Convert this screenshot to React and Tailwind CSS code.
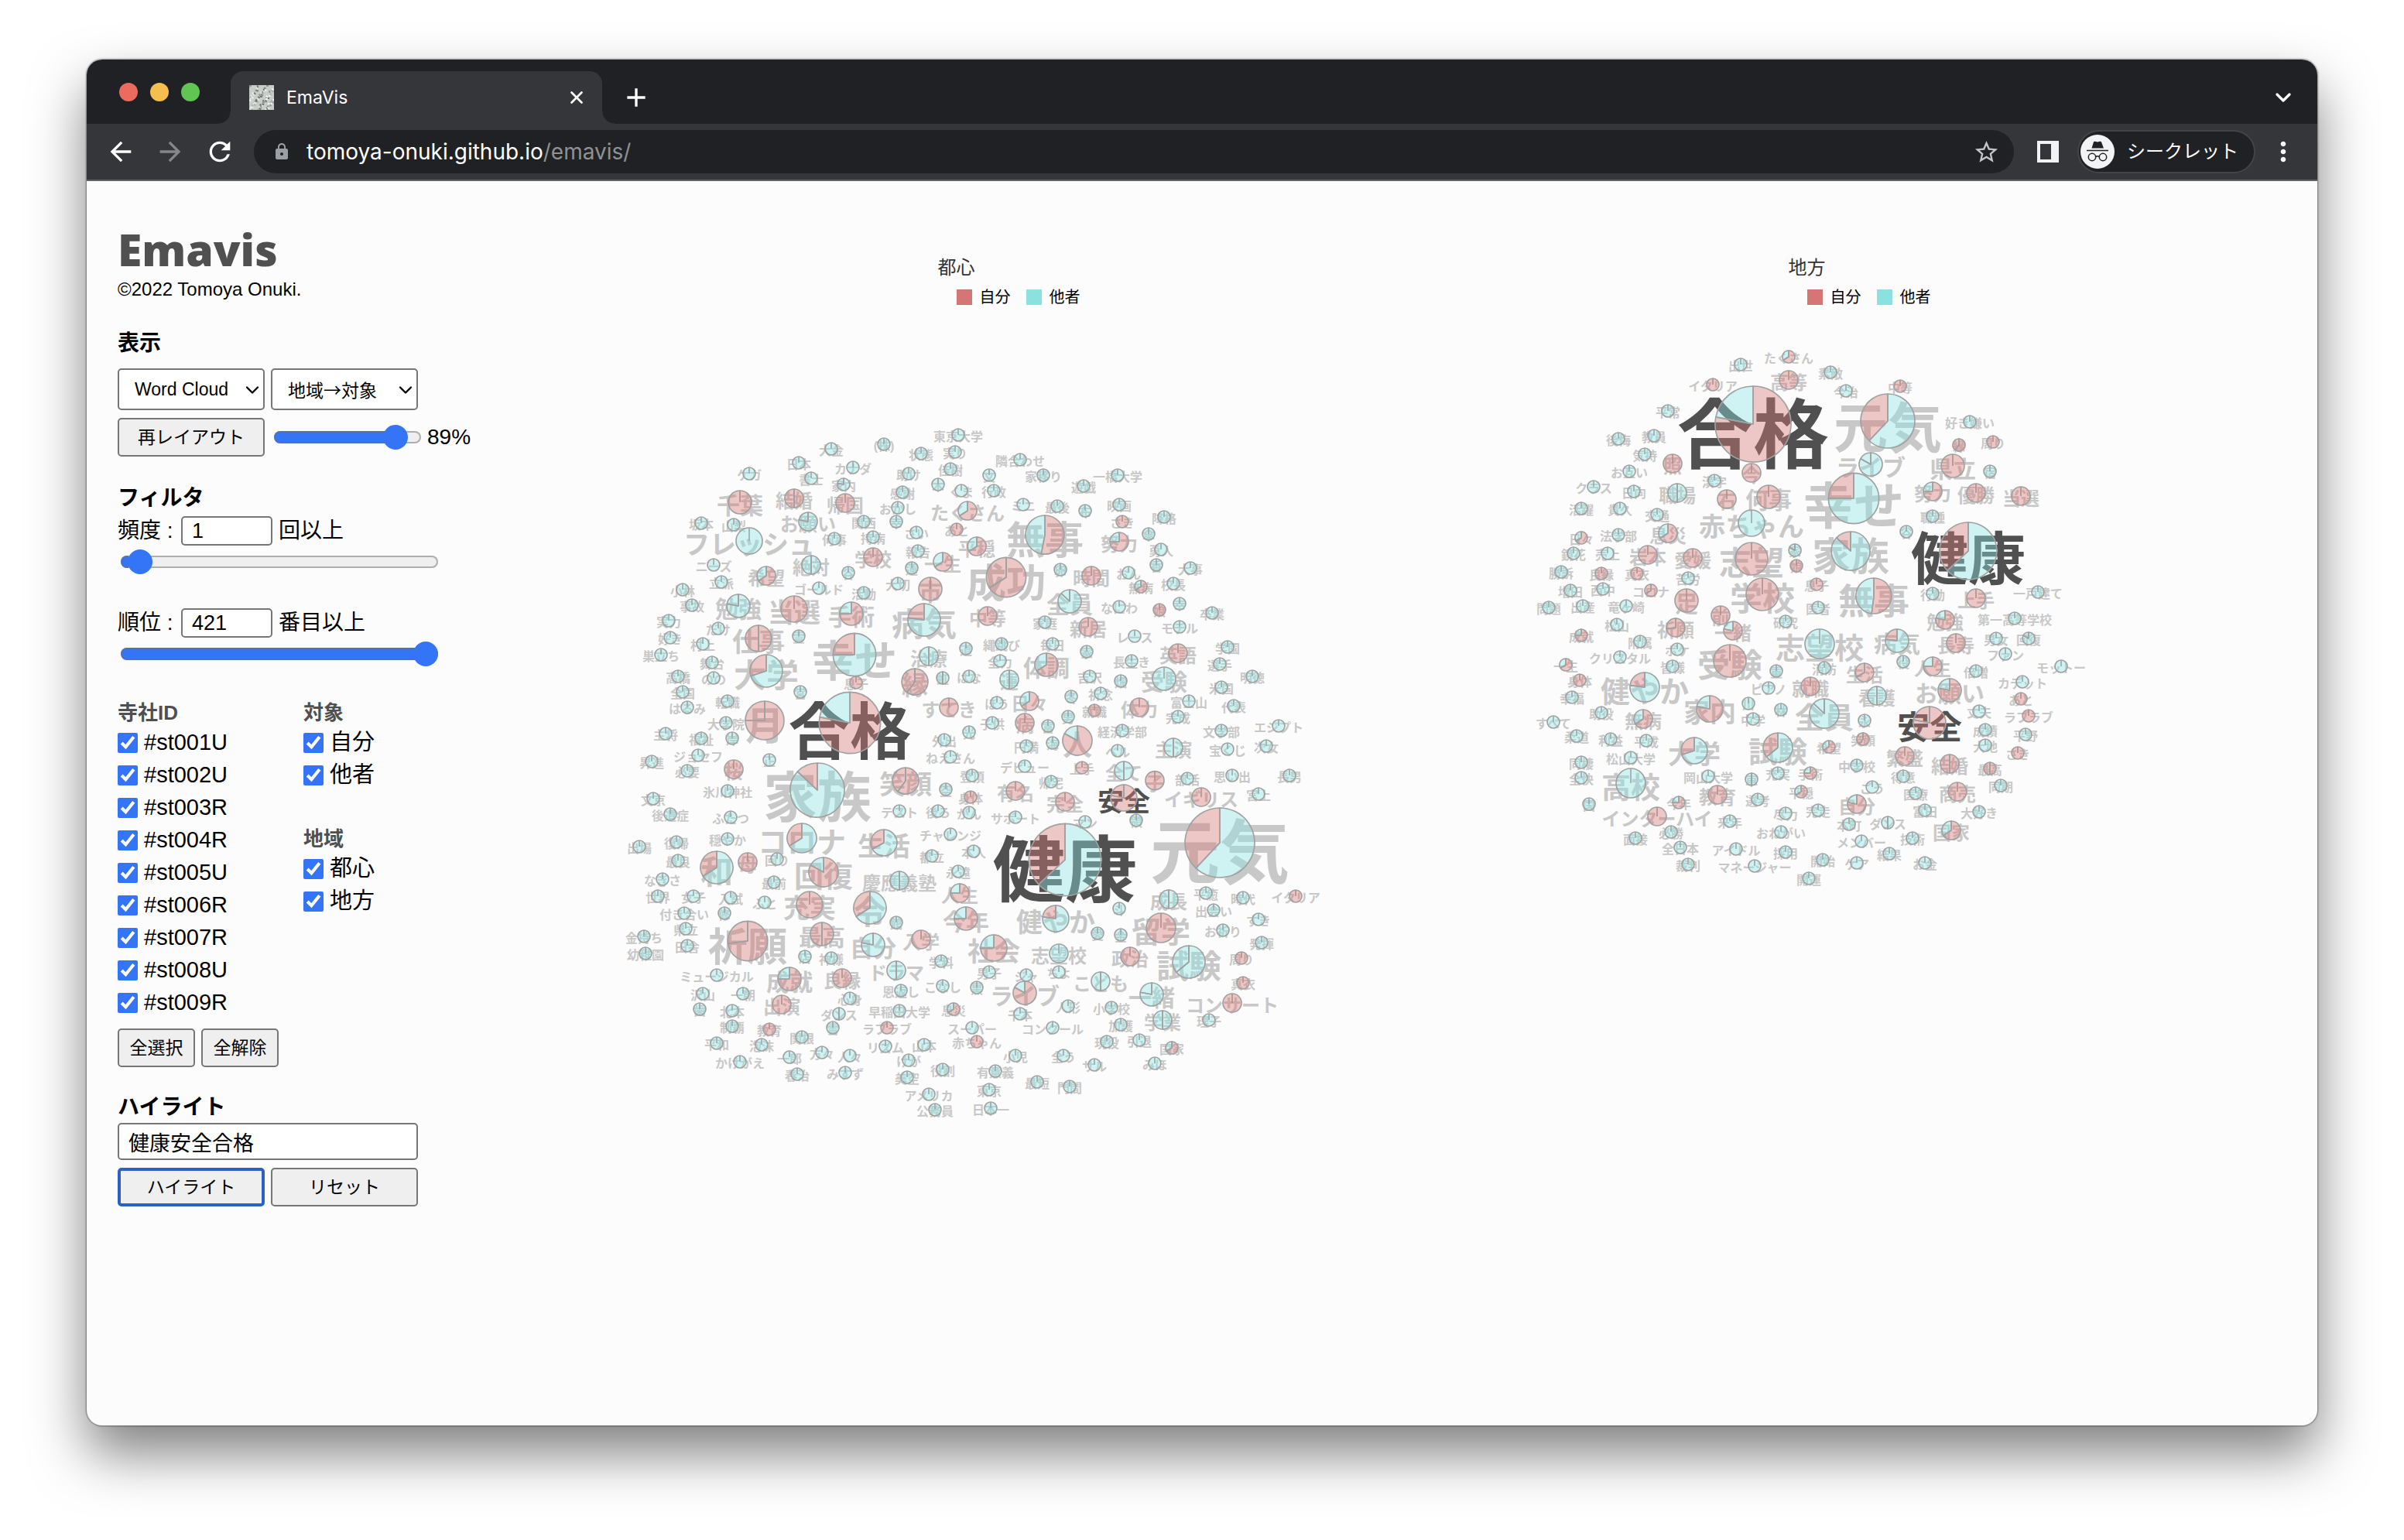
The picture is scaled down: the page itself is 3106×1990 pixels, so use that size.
import React, { useState } from "react";
import { MdArrowBack, MdArrowForward, MdRefresh, MdLock, MdStarBorder, MdAdd, MdMoreVert } from "react-icons/md";
import { ChevronDown, X } from "lucide-react";

/*
 * Word lists. Each line: word, x, y, radius (default 24), slices (default "c").
 * Slices: "r" / "c" is a whole red or cyan pie; "rc75" is 75% red then cyan.
 */
const CITY = [
  { dx: 0, dy: 0, rows: `
東京大学 1344 66
(株) 1056 102
大金 852 120
状態 1200 138
実り 1332 132
日本 726 174
カナダ 936 192
佳樹 1314 198
ケガ 534 216
助け 1152 216
書士 774 234
家内 900 258 24 cc78
木 1266 258
感謝 1128 288
くま 1356 282
千葉 498 327 45 r
結婚 708 312 36 rr50
帰国 906 330 36 r
おかし 1110 348
たくさん 1380 360 36 rc66
お願い 762 402 36 cc78
坂本 348 408
山梨 474 414
関西 978 402
幸 1104 402
あと 1338 432 24 r
さい 1182 444
フレッシュ 534 477 51
何事 864 468
持病 1014 462
報告 1188 516
学校 1014 540 36 r
平穏 1416 498 36 rc66
ニーズ 396 570
絶対 774 570 36 cc50
一生 1284 558 36 rc66
蓮 1164 582
希望 600 612 36 rc66
谷 918 600
立派 426 636
小林 276 666
ゴールド 804 660
活動 978 678
大切 1110 642
市 1236 663 45 r
事故 312 726
勉強 492 729 45 cc78
当選 708 741 51 r
手術 930 759 45 rc75
病気 1212 783 63 cr77
実力 222 786
だけ 414 816
仕事 570 855 51 rr50
霊 726 846
幸せ 942 918 83 cr75
好き 228 852
村上 354 876
巣立ち 192 918
舞台 390 948
治療 1230 924 36 cc50
道 1374 894
大学 600 981 63 cr70
高橋 258 1002
のの 396 1008
縁 1176 1023 51 rr60
虹 1284 1008 24 cc50
はな 1386 1002
息子 948 1026 24 r
全国 276 1062
営 732 1062
はるみ 294 1122
転職 450 1098
すてき 1308 1122 36 r
合格 924 1182 119 rc78
月 594 1173 75 rr75
大学院 444 1182
主将 210 1224
福祉 348 1242
岸 468 1242
光 1386 1218
外出 1290 1248
ねえさん 1314 1314
ジョセフ 336 1308
昇進 156 1332
桜 474 1362 36 r
正 612 1326
必要 294 1368
登頂 1398 1386` },
  { dx: 1350, dy: 0, rows: `
隣合わせ 234 162
文 114 222
家移り 324 222
一橋大学 612 222
遊戯 480 264
行政 132 282
ミニ 246 336
最後 378 342
布 486 360
映画 618 336
降格 792 384
さき 630 402 24 r
無事 330 453 75 rc53
努力 618 480 36 rc75
傘 732 450
勇人 780 510
香 762 570
成功 180 618 77 rr66
卵 390 588
時間 510 612 36 r
おん 654 600
大事 894 582
無病 702 654 24 rc66
校長 828 642
全員 426 711 45 cc87
なにわ 618 732
娘 774 744 24 r
幸 852 720
卒業 978 756
中等 108 768 36 r
家庭 330 792
新居 498 810 36 r
モデル 852 810
レース 678 846
縄跳び 162 876
毎日 360 876
家 492 906
英語 846 912 36 r
学園 1038 888
全力 156 942
体調 336 957 45 rc66
長生き 666 942
選手 1008 954
運 192 1014 36 cc50
吉沢 504 1002
畑 624 1020
受験 792 1011 45
明徳 1134 1002
米国 1014 1044
冬 432 1080
祈念 546 1068
ほう 144 1104
日々 270 1098 36 rc66
就職 522 1134 24 r
体力 696 1122 36 r
富士山 888 1098
代表 1062 1116
男 420 1158
完成 846 1158
子供 126 1182
病 252 1182 36 r
富 342 1194
人 456 1251 57 rc83
経済学部 630 1212
文学部 1014 1212
エジプト 1236 1194
円満 258 1272
海 360 1260
ベル 612 1290
主演 828 1278 36 cc50
宝くじ 1038 1284
次女 1188 1272
デビュー 252 1350
上手 474 1356 24 r
全て 636 1368 36 cc50
思い出 1056 1386
長男 1278 1386` },
  { dx: 0, dy: 1380, rows: `
家族 798 63 105 cr87
笑顔 1140 27 51 rr60
空 1296 60
身体 1392 90 24 r
氷川神社 450 66
文京 162 96
テスト 1116 144
後ろ 1266 144
がん 1386 150
後遺症 228 156
ふたつ 462 168
コロナ 738 249 57 cr66
生活 1056 267 51 cr67
チャレンジ 1314 234
穏やか 450 252
復帰 252 264
出場 108 282
本人 1404 300
都立 1242 318
最良 258 336
和 408 363 63 cr66
母 528 342 36 r
回り 642 330
回復 822 381 57 rc83
永遠 1344 378
なぎさ 198 408
慶應義塾 1116 414 36 cc50
最前 630 420
人生 1350 462 36 rc75
世界 180 474
女子 318 474
入試 462 480
充実 768 507 51 r
ふと 594 498
令 1002 519 63 cr66
今年 1374 561 45 rc75
付き合い 282 540
修 438 540
館 1104 576
県立 288 600
金持ち 126 630
祈願 528 648 77 rr73
最高 816 621 45 rr50
自分 1014 663 45 cc78
入学 1200 642 36 r
田舎 294 666
幼稚園 132 696
店 750 708
神様 852 714
学科 1278 726
ドラマ 1104 762 36 cc50
ミュージカル 408 780
成就 690 795 45 rc75
良縁 894 792 36 r
こなし 1284 822
黒 1416 828
恩返し 1122 840
沢山 354 852
一朝 510 852
心身 924 870
出演 660 894 36 r
歯 342 912
北本 468 918
息災 1326 912 24 rc66
早稲田大学 1116 918
ダンス 882 930 24 cc50
制覇 468 978
教育 612 990 24 r
雪 858 984
ラブラブ 1068 984 24 r
スーパー 1398 984
関根 738 1020
赤ちゃん 1416 1038 24 r
平和 408 1044
泡沫 582 1050
リズム 1062 1056
山本 1212 1050
方々 816 1080
人々 924 1092
一郎 690 1098
かけがえ 498 1116
けが 1152 1110
役割 1284 1146
みすず 906 1158
春治 720 1164
美空 1146 1176
アメリカ 1230 1242
公務員 1254 1302` },
  { dx: 1350, dy: 1380, rows: `
帰宅 354 30
子 756 26 36 r
部活 882 18
有名 216 66 36 r
完全 408 108 36 r
安全 636 93 51 rr78
イギリス 936 90 36 r
宮上 1158 78
サポート 216 168
マン 486 186
領 684 180
元気 1008 267 135 cr62
健康 408 333 140 cr63
平癒 954 462
時代 1098 480
イタリア 1302 474 24 r
成長 810 486 36 cc50
出会い 984 528
斗 618 522
健やか 372 561 51 cr77
すき 1158 564
留学 780 597 57 r
お祈り 1020 606
愛 534 618
金 624 624
発揮 1170 654
社会 132 675 51 rc75
志望校 384 696 36
政治 660 708 36 r
試験 888 729 63 cc64
周り 1092 714 24 r
男子 114 768
ちよ 384 768
ジャ 258 780
こども 546 804 36 cc50
真衣 1098 810 24 r
ライブ 252 849 45 rc83
一緒 744 855 45 cc78
コンサート 1056 888 36 r
人形 420 900
小学校 588 906
千本 234 930
学業 786 954 36 cc50
理子 966 954
加護 624 972
コンクール 360 984
現役 570 1038
引退 696 1032
国家 822 1062 24 rc66
小児 216 1092
全う 402 1092
サル 522 1128
みほ 756 1122
有意義 138 1152
最短 300 1194
門間 426 1212
東京 114 1224
日本一 120 1296` },
];

const REGION = [
  { dx: 0, dy: 0, rows: `
たくさん 1023 93 24 rc66
出世 837 123
高等 1023 183 36 r
イタリア 729 201 24 r
合格 885 354 147 rc78
平常 555 303
後悔 363 411
教員 501 399
気持 465 471
照 573 507 36 r
お互い 405 537
今 879 543 36 r
漢字 735 573
クラス 267 597
日向 423 615
職場 591 621 36 cc50
石 783 645 36 r
何事 945 636 45 r
活躍 219 681
貴久 369 681
交通 513 705
赤ちゃん 879 738 51
息災 555 777 36 rc66
日々 219 795 24 rc66
法学部 363 783
鏡花 189 855
売上 321 855
岩本 477 861 36 r
愛媛 651 873 36 r
志望 879 876 63 r
家 1047 843 24 cc83
娘 1053 903 24 r
勝訴 141 927
良縁 297 933 24 r
真衣 435 933 24 r
苦労 633 951
増田 177 999
西中 303 993
コロナ 489 999 24 rr66
足 627 1038 45 r
学校 921 1014 63 r
竜ヶ崎 393 1059
出産 225 1059
問題 93 1065
前 759 1095 36 r` },
  { dx: 1080, dy: 0, rows: `
素敵 105 153
今治 165 225
中等 375 207 24 r
元気 327 342 105 cr62
好き嫌い 645 345
縁 603 435 24 rr60
周り 735 423 24 r
ライブ 261 510 45 cc83
県立 579 516 45 r
宿 723 537
努力 501 615 36 rc75
優勝 669 621 36 r
当選 843 633 36 r
幸せ 195 642 98 cr75
職種 501 711
谷 399 771
家族 183 846 75 cr87
健康 639 846 111 cr63
息子 51 975 24 r
無事 273 1020 69 rc52
行動 501 1011
上手 669 1029 36 r
一戸建て 909 1005
医者 57 1065` },
  { dx: 0, dy: 1080, rows: `
松山 357 51
祈願 585 63 36 rr73
成就 219 93 24 rc75
一緒 807 75 36 rc78
研究 1011 39
附属 447 117
クリスタル 369 177
ボケ 591 147
一生 159 207 24 rc66
受験 795 192 63 r
皆様 573 213
重 975 231
身体 213 267 24 r
健やか 465 294 57 cr77
ピアノ 945 297
就職 1107 291 36 r
幸福 183 333
川 867 357
家内 717 378 51 rc78
林 993 381
助役 297 393
無病 459 417 36 rc66
中学 885 417
すべて 111 429
柔道 201 483
利益 333 495
平成 471 501
大学 657 540 51 cr70
試験 981 528 57 cr64
松山大学 411 567
同棲 219 585
全快 219 645
高校 411 666 57
岡山大学 711 639
車 879 651 24 cc50
充実 981 627
手術 1107 627 24 rc75
平穏 1071 699 24 rc66
教育 747 711 36 r
選考 903 729
今年 597 741 24 rc75
国 249 747
尽力 1011 783
インターハイ 513 795 36 r
来年 795 813
必勝 567 855
おねがい 993 855
面接 429 879
全日本 603 915
アイドル 819 921
採用 1011 933
裁判 633 981
マネージャー 891 987
開運 1101 1035` },
  { dx: 1080, dy: 1080, rows: `
勉強 549 33 36 rc78
第一高等学校 819 27
志望校 63 126 57
病気 363 114 45 cr77
長寿 591 123 36 r
男女 747 105
回復 873 105 24 cc83
ファン 783 165
役 387 195
消防 81 219
生活 237 237 36 rr67
人生 501 213 36 rc75
倍増 669 231
モットー 999 213
カデット 849 273
看護 285 327 36 cc50
お願い 567 306 45 rc78
あと 843 339 24 r
全員 81 396 57 cc87
安全 489 432 63 rr78
丈夫 681 387
ラブラブ 873 405 24 r
永 237 423
成績 705 459
平野 861 477
笑顔 231 495 24 rr60
希望 99 525 24 rc66
大地 705 519
さき 831 549 24 r
繁盛 393 561 36 r
結婚 567 591 36 rr50
中学校 207 597
最高 723 609 24 rr50
得意 387 639
ごう 267 681
同期 765 675
医療 435 705
商売 597 699 36 r
自分 207 747 36 rc78
完走 57 771
富田 471 771
大好き 681 777
本町 177 825
ダンス 327 819 24 cc50
国家 573 849 36 rc66
技術 423 879
メンバー 225 891
結果 333 939
開始 75 963
ケア 207 975
お金 471 975` },
];

const parse = (sectors) =>
  sectors.flatMap(({ dx, dy, rows }) =>
    rows.trim().split("\n").map((line) => {
      const [word, x, y, r = "24", slices = "c"] = line.split(" ");
      return { word, x: +x + dx, y: +y + dy, r: +r, slices };
    })
  );

const COLORS = { r: "#d67575", c: "#8be6e4" };
const HIGHLIGHT = ["健康", "安全", "合格"];

function slicePath(x, y, r, from, to) {
  const point = (t) => {
    const a = t * 2 * Math.PI;
    return `${(x + r * Math.sin(a)).toFixed(1)} ${(y - r * Math.cos(a)).toFixed(1)}`;
  };
  return `M${x} ${y}L${point(from)}A${r} ${r} 0 ${to - from > 0.5 ? 1 : 0} 1 ${point(to)}Z`;
}

function Pie({ x, y, r, slices }) {
  if (slices.length === 1) {
    return (
      <g stroke="#a1a1a1" strokeWidth="5">
        <circle cx={x} cy={y} r={r} fill={COLORS[slices]} fillOpacity="0.4" />
        <path d={`M${x} ${y}V${y - r}`} stroke={slices === "r" ? "#b58e8e" : "#9fa9a9"} />
      </g>
    );
  }
  const share = Number(slices.slice(2)) / 100;
  return (
    <g stroke="#a1a1a1" strokeWidth="5" strokeLinejoin="round" fillOpacity="0.4">
      <path d={slicePath(x, y, r, 0, share)} fill={COLORS[slices[0]]} />
      <path d={slicePath(x, y, r, share, 1)} fill={COLORS[slices[1]]} />
    </g>
  );
}

function Cloud({ title, viewBox, words }) {
  return (
    <section className="min-w-0 flex-1">
      <div className="mx-auto mt-24 w-[268px]">
        <h3 className="text-2xl leading-8 text-[#333]">{title}</h3>
        <ul className="mt-2 flex gap-5 pl-6 text-xl leading-7">
          <li className="flex items-center gap-2.5">
            <span className="size-5 bg-[#d67575]" />
            自分
          </li>
          <li className="flex items-center gap-2.5">
            <span className="size-5 bg-[#8be0e0]" />
            他者
          </li>
        </ul>
      </div>
      <svg viewBox={viewBox} className="mt-8 w-full" role="img" aria-label={title}>
        {words.map((w) => (
          <g key={`${w.x}-${w.y}`}>
            <text
              x={w.x}
              y={w.y + w.r}
              fontSize={w.r * 2}
              textAnchor="middle"
              className={HIGHLIGHT.includes(w.word) ? "fill-[#505050] font-bold" : "fill-[#c8c8c8] font-bold"}
            >
              {w.word}
            </text>
            <Pie {...w} />
          </g>
        ))}
      </svg>
    </section>
  );
}

function Slider({ label, value, min, max, onChange, className }) {
  const fill = { "--fill": `${((value - min) / (max - min)) * 100}%` };
  return (
    <input
      type="range"
      aria-label={label}
      min={min}
      max={max}
      value={value}
      onChange={(e) => onChange(Number(e.target.value))}
      style={fill}
      className={`h-8 appearance-none bg-transparent [&::-webkit-slider-runnable-track]:h-4 [&::-webkit-slider-runnable-track]:rounded-full [&::-webkit-slider-runnable-track]:bg-[linear-gradient(to_right,#3375f6_var(--fill),#efefef_var(--fill))] [&::-webkit-slider-runnable-track]:shadow-[inset_0_0_0_2px_rgba(110,110,110,0.5)] [&::-webkit-slider-thumb]:-mt-2 [&::-webkit-slider-thumb]:size-8 [&::-webkit-slider-thumb]:appearance-none [&::-webkit-slider-thumb]:rounded-full [&::-webkit-slider-thumb]:bg-[#3375f6] ${className}`}
    />
  );
}

function Select({ label, options, className = "" }) {
  return (
    <div className="relative w-[190px]">
      <select
        aria-label={label}
        className={`h-[54px] w-full appearance-none rounded-[5px] border-2 border-[#767676] bg-white pl-5 text-[23px] ${className}`}
      >
        {options.map((o) => (
          <option key={o}>{o}</option>
        ))}
      </select>
      <ChevronDown size={28} strokeWidth={2} className="pointer-events-none absolute top-3.5 right-0.5" />
    </div>
  );
}

function Button({ children, className = "" }) {
  return (
    <button type="button" className={`h-[50px] rounded-[5px] bg-[#efefef] text-[23px] ${className}`}>
      {children}
    </button>
  );
}

function CheckGroup({ title, items, className = "" }) {
  return (
    <fieldset className={className}>
      <legend className="text-[26px] leading-9 font-bold text-[#505050]">{title}</legend>
      {items.map((item) => (
        <label key={item} className="flex h-[42px] items-center gap-2 text-[29px]">
          <input type="checkbox" defaultChecked className="size-[26px] accent-[#3375f6]" />
          {item}
        </label>
      ))}
    </fieldset>
  );
}

function NumberRow({ label, value, suffix, onChange, className }) {
  return (
    <label className={`flex h-10 items-center ${className}`}>
      <span className="w-[82px] whitespace-pre">{label} :</span>
      <input
        value={value}
        onChange={(e) => onChange(Number(e.target.value) || 0)}
        className="h-[38px] w-[118px] rounded-[5px] border-2 border-[#767676] bg-white px-3 text-[27px]"
      />
      <span className="ml-2">{suffix}</span>
    </label>
  );
}

function Sidebar() {
  const [zoom, setZoom] = useState(89);
  const [freq, setFreq] = useState(1);
  const [rank, setRank] = useState(421);
  const ids = ["1U", "2U", "3R", "4R", "5U", "6R", "7R", "8U", "9R"].map((s) => `#st00${s}`);
  const h2 = "text-[28px] leading-10 font-bold";
  return (
    <aside className="w-[684px] shrink-0 pt-[60px] pl-10 text-[28px]">
      <h1 className="font-['Open_Sans'] text-[57px] leading-[56px] font-extrabold text-[#505050]">Emavis</h1>
      <p className="mt-2.5 text-2xl leading-7">©2022 Tomoya Onuki.</p>

      <h2 className={`${h2} mt-9`}>表示</h2>
      <div className="mt-3 flex gap-2">
        <Select label="表示形式" options={["Word Cloud"]} />
        <Select label="分類" options={["地域→対象"]} className="font-['Noto_Sans_CJK_JP',sans-serif]" />
      </div>
      <div className="mt-2.5 flex items-center">
        <Button className="w-[190px] border-2 border-[#767676]">再レイアウト</Button>
        <Slider label="倍率" min={0} max={100} value={zoom} onChange={setZoom} className="ml-3 w-[190px]" />
        <output className="ml-2">{zoom}%</output>
      </div>

      <h2 className={`${h2} mt-[34px]`}>フィルタ</h2>
      <NumberRow label="頻度" value={freq} suffix="回以上" onChange={setFreq} className="mt-0.5" />
      <Slider label="頻度" min={0} max={40} value={freq} onChange={setFreq} className="mt-1 ml-1 block w-[410px]" />
      <NumberRow label="順位" value={rank} suffix="番目以上" onChange={setRank} className="mt-[43px]" />
      <Slider label="順位" min={1} max={421} value={rank} onChange={setRank} className="mt-1 ml-1 block w-[410px]" />

      <div className="mt-[42px] grid grid-cols-[240px_1fr]">
        <CheckGroup title="寺社ID" items={ids} />
        <div>
          <CheckGroup title="対象" items={["自分", "他者"]} />
          <CheckGroup title="地域" items={["都心", "地方"]} className="mt-[43px]" />
        </div>
      </div>
      <div className="mt-3 flex gap-2">
        <Button className="w-[100px] border-2 border-[#767676]">全選択</Button>
        <Button className="w-[100px] border-2 border-[#767676]">全解除</Button>
      </div>

      <h2 className={`${h2} mt-8`}>
        <label htmlFor="highlight">ハイライト</label>
      </h2>
      <input
        id="highlight"
        defaultValue="健康安全合格"
        className="block h-12 w-[388px] rounded-[5px] border-2 border-[#767676] bg-white px-3 text-[27px]"
      />
      <div className="mt-2.5 flex gap-2">
        <Button className="w-[190px] border-4 border-[#2a60c8]">ハイライト</Button>
        <Button className="w-[190px] border-2 border-[#767676]">リセット</Button>
      </div>
    </aside>
  );
}

function Favicon() {
  const dots = Array.from({ length: 90 }, (_, i) => ({
    x: (i * 37) % 31,
    y: (i * 53 + ((i * i) % 7)) % 31,
    c: ["#8f9694", "#f4f5f2", "#a9b0ad", "#dfe2dd", "#6f7775"][i % 5],
  }));
  return (
    <svg viewBox="0 0 32 32" className="size-8">
      <rect width="32" height="32" fill="#c9cdc9" />
      {dots.map((d, i) => (
        <rect key={i} x={d.x} y={d.y} width="3" height="2" fill={d.c} transform={`rotate(${(i * 40) % 90} ${d.x} ${d.y})`} />
      ))}
    </svg>
  );
}

function Incognito() {
  return (
    <svg viewBox="0 0 44 44" className="size-11">
      <circle cx="22" cy="22" r="22" fill="#f1f3f4" />
      <path d="M17 9.5q.6-1.2 2-.7l3 .8 3-.8q1.400-.5 2 .7L30 17.500H14.500Z" fill="#202124" />
      <path d="M8 20.500H36" stroke="#202124" strokeWidth="1.600" />
      <g fill="none" stroke="#202124" strokeWidth="1.500">
        <circle cx="15" cy="29" r="4.700" />
        <circle cx="29" cy="29" r="4.700" />
        <path d="M19.700 28.500q2.300-1.500 4.600 0" />
      </g>
    </svg>
  );
}

function BrowserChrome() {
  return (
    <header className="font-['Inter','Noto_Sans_CJK_JP',sans-serif] text-white">
      <div className="flex h-[83px] items-end bg-[#202124]">
        <div className="flex gap-4 self-center pl-[42px]">
          <span className="size-6 rounded-full bg-[#ed6a5e]" />
          <span className="size-6 rounded-full bg-[#f5bf4f]" />
          <span className="size-6 rounded-full bg-[#61c554]" />
        </div>
        <div className="ml-6 flex items-end">
          <span className="size-4 bg-[radial-gradient(circle_at_0_0,#202124_15px,#35363a_16px)]" />
          <div className="flex h-[68px] w-[480px] items-center rounded-t-2xl bg-[#35363a] pr-5 pl-6">
            <Favicon />
            <span className="ml-4 flex-1 text-[23px]">EmaVis</span>
            <button type="button" aria-label="タブを閉じる">
              <X size={26} strokeWidth={2.5} />
            </button>
          </div>
          <span className="size-4 bg-[radial-gradient(circle_at_100%_0,#202124_15px,#35363a_16px)]" />
        </div>
        <button type="button" aria-label="新しいタブ" className="mb-3.5 ml-2">
          <MdAdd size={40} />
        </button>
        <button type="button" aria-label="タブを検索" className="mr-7 mb-[18px] ml-auto">
          <ChevronDown size={32} strokeWidth={2.5} />
        </button>
      </div>
      <div className="flex h-[74px] items-center border-b-2 border-[#5f6063] bg-[#35363a] pr-6 pl-6">
        <button type="button" aria-label="戻る">
          <MdArrowBack size={40} />
        </button>
        <button type="button" aria-label="進む" className="ml-6 text-[#86878a]">
          <MdArrowForward size={40} />
        </button>
        <button type="button" aria-label="再読み込み" className="ml-6">
          <MdRefresh size={40} />
        </button>
        <div className="ml-6 flex h-14 flex-1 items-center rounded-full bg-[#202124] pr-[18px] pl-6">
          <MdLock size={24} className="text-[#9aa0a6]" />
          <a href="https://tomoya-onuki.github.io/emavis/" className="ml-5 flex-1 text-[28px]">
            tomoya-onuki.github.io<span className="text-[#8f9194]">/emavis/</span>
          </a>
          <button type="button" aria-label="ブックマーク" className="text-[#c4c5c7]">
            <MdStarBorder size={35} />
          </button>
        </div>
        <button type="button" aria-label="サイドパネル" className="ml-[30px] h-7 w-7 border-4 border-r-[10px] border-[#f1f3f4]" />
        <button type="button" className="ml-6 flex h-14 items-center gap-4 rounded-full border-2 border-[#434447] bg-[#202124] pr-5 pl-0.5 text-2xl">
          <Incognito />
          シークレット
        </button>
        <button type="button" aria-label="メニュー" className="ml-4">
          <MdMoreVert size={40} />
        </button>
      </div>
    </header>
  );
}

const cityWords = parse(CITY);
const regionWords = parse(REGION);

export default function App() {
  return (
    <div className="flex min-h-screen bg-white px-28 pt-[77px] pb-[148px] font-['Liberation_Sans','Noto_Sans_CJK_JP',sans-serif] text-black">
      <div className="flex min-w-0 flex-1 flex-col overflow-hidden rounded-[20px] bg-[#fcfcfc] shadow-[0_0_2px_1px_rgba(0,0,0,0.4),0_36px_70px_rgba(0,0,0,0.5)]">
        <BrowserChrome />
        <main className="flex flex-1">
          <Sidebar />
          <Cloud title="都心" viewBox="18 -330 3297 3180" words={cityWords} />
          <Cloud title="地方" viewBox="-225 0 3297 3180" words={regionWords} />
        </main>
      </div>
    </div>
  );
}
